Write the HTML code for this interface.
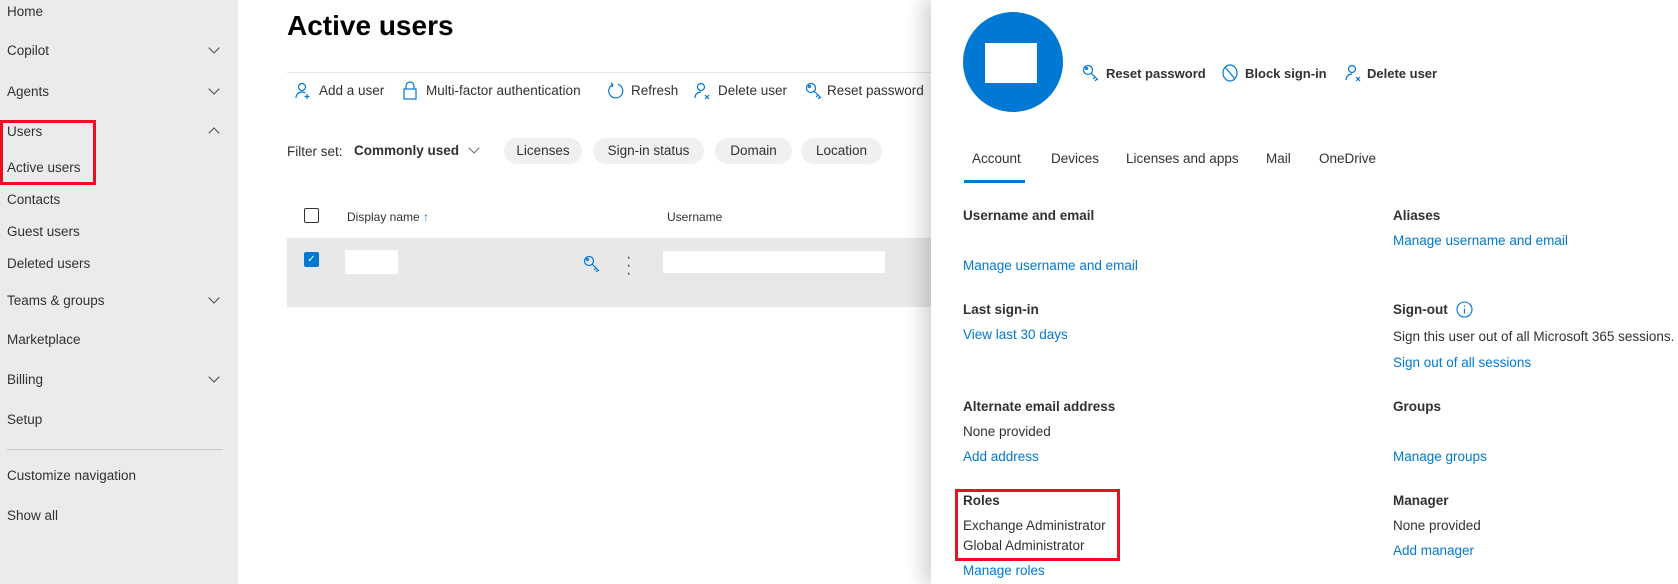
<!DOCTYPE html>
<html><head><meta charset="utf-8"><style>
*{margin:0;padding:0;box-sizing:border-box}
body{width:1678px;height:584px;overflow:hidden;background:#fff;font-family:"Liberation Sans",sans-serif;font-size:13.5px;color:#323130;position:relative}
.a{position:absolute;white-space:nowrap;line-height:18px}
.sb{position:absolute;left:0;top:0;width:238px;height:584px;background:#ebebeb}
.chev{position:absolute;width:8px;height:8px;border-right:1.3px solid #444;border-bottom:1.3px solid #444;transform:rotate(45deg)}
.up{transform:rotate(-135deg)}
.lk{color:#0078d4}
.b{font-weight:bold}
.pill{position:absolute;height:26px;top:138px;background:#f0f0f0;border-radius:13px;text-align:center;line-height:26px;color:#323130}
.panel{position:absolute;left:931px;top:0;width:747px;height:584px;background:#fff;box-shadow:-8px 0 18px rgba(0,0,0,.18)}
svg{position:absolute}
</style></head><body>
<div class="sb"></div>
<div class="a" style="left:7px;top:3px">Home</div>
<div class="a" style="left:7px;top:42px">Copilot</div><div class="chev" style="left:210px;top:44px"></div>
<div class="a" style="left:7px;top:83px">Agents</div><div class="chev" style="left:210px;top:85px"></div>
<div class="a" style="left:7px;top:123px">Users</div><div class="chev up" style="left:210px;top:129px"></div>
<div class="a" style="left:7px;top:159px">Active users</div>
<div class="a" style="left:7px;top:191px">Contacts</div>
<div class="a" style="left:7px;top:223px">Guest users</div>
<div class="a" style="left:7px;top:255px">Deleted users</div>
<div class="a" style="left:7px;top:292px">Teams &amp; groups</div><div class="chev" style="left:210px;top:294px"></div>
<div class="a" style="left:7px;top:331px">Marketplace</div>
<div class="a" style="left:7px;top:371px">Billing</div><div class="chev" style="left:210px;top:373px"></div>
<div class="a" style="left:7px;top:411px">Setup</div>
<div style="position:absolute;left:7px;top:449px;width:216px;height:1px;background:#c8c8c8"></div>
<div class="a" style="left:7px;top:467px">Customize navigation</div>
<div class="a" style="left:7px;top:507px">Show all</div>
<div style="position:absolute;left:0;top:120px;width:96px;height:65px;border:3px solid #e81123"></div>

<div class="a b" style="left:287px;top:9px;font-size:28px;line-height:34px;color:#000">Active users</div>
<div style="position:absolute;left:287px;top:72px;width:650px;height:1px;background:#e6e6e6"></div>
<svg style="left:294px;top:82px" width="18" height="18" viewBox="0 0 18 18" fill="none" stroke="#0078d4" stroke-width="1.2"><circle cx="8" cy="5" r="3.5"/><path d="M2 16c0-4 3-6 6-6 1.5 0 2.5.4 3.5 1M13 12v5M10.5 14.5h5"/></svg>
<div class="a" style="left:319px;top:82px">Add a user</div>
<svg style="left:402px;top:81px" width="16" height="19" viewBox="0 0 16 19" fill="none" stroke="#0078d4" stroke-width="1.2"><path d="M4 8V5a4 4 0 0 1 8 0v3"/><rect x="2" y="8" width="12" height="10"/></svg>
<div class="a" style="left:426px;top:82px">Multi-factor authentication</div>
<svg style="left:607px;top:82px" width="18" height="18" viewBox="0 0 18 18" fill="none" stroke="#0078d4" stroke-width="1.2"><path d="M6 2.5A7 7 0 1 0 11 2.3M6 2.5L4 1M6 2.5L5 5"/></svg>
<div class="a" style="left:631px;top:82px">Refresh</div>
<svg style="left:693px;top:82px" width="18" height="18" viewBox="0 0 18 18" fill="none" stroke="#0078d4" stroke-width="1.2"><circle cx="8" cy="5" r="3.5"/><path d="M2 16c0-4 3-6 6-6M12 13l4 4M16 13l-4 4"/></svg>
<div class="a" style="left:718px;top:82px">Delete user</div>
<svg style="left:805px;top:82px" width="18" height="18" viewBox="0 0 18 18" fill="none" stroke="#0078d4" stroke-width="1.2"><circle cx="6" cy="6" r="4.5"/><circle cx="4.5" cy="4.5" r="1"/><path d="M9 9l7 7M13 13l-2 2M15 15l-2 2"/></svg>
<div class="a" style="left:827px;top:82px">Reset password</div>

<div class="a" style="left:287px;top:143px">Filter set:</div>
<div class="a b" style="left:354px;top:142px">Commonly used</div>
<div class="chev" style="left:470px;top:144px;border-color:#666"></div>
<div class="pill" style="left:504px;width:78px">Licenses</div>
<div class="pill" style="left:593px;width:111px">Sign-in status</div>
<div class="pill" style="left:715px;width:77px">Domain</div>
<div class="pill" style="left:801px;width:81px">Location</div>

<div style="position:absolute;left:304px;top:208px;width:15px;height:15px;border:1.3px solid #333;border-radius:2px"></div>
<div class="a" style="left:347px;top:208px;font-size:12px">Display name <span style="color:#0078d4">↑</span></div>
<div class="a" style="left:667px;top:208px;font-size:12px">Username</div>
<div style="position:absolute;left:287px;top:238px;width:650px;height:69px;background:#e8e8e8"></div>
<div style="position:absolute;left:304px;top:252px;width:15px;height:15px;background:#0078d4;border-radius:2px;color:#fff;font-size:10px;line-height:15px;text-align:center">✓</div>
<div style="position:absolute;left:345px;top:250px;width:53px;height:24px;background:#fff"></div>
<svg style="left:583px;top:255px" width="18" height="18" viewBox="0 0 18 18" fill="none" stroke="#0078d4" stroke-width="1.2"><circle cx="6" cy="6" r="4.5"/><circle cx="4.5" cy="4.5" r="1"/><path d="M9 9l7 7M13 13l-2 2M15 15l-2 2"/></svg>
<div class="a" style="left:626px;top:254px;font-size:16px;line-height:8px;color:#444">·<br>·<br>·</div>
<div style="position:absolute;left:663px;top:251px;width:222px;height:22px;background:#fff"></div>

<div class="panel"></div>
<div style="position:absolute;left:963px;top:12px;width:100px;height:100px;border-radius:50%;background:#0078d4"></div>
<div style="position:absolute;left:985px;top:43px;width:52px;height:40px;background:#fff"></div>
<svg style="left:1082px;top:64px" width="18" height="18" viewBox="0 0 18 18" fill="none" stroke="#0078d4" stroke-width="1.2"><circle cx="6" cy="6" r="4.5"/><circle cx="4.5" cy="4.5" r="1"/><path d="M9 9l7 7M13 13l-2 2M15 15l-2 2"/></svg>
<div class="a b" style="left:1106px;top:65px;font-size:13px">Reset password</div>
<svg style="left:1221px;top:64px" width="18" height="18" viewBox="0 0 18 18" fill="none" stroke="#0078d4" stroke-width="1.2"><ellipse cx="9" cy="9" rx="7" ry="8"/><path d="M4 3l10 12"/></svg>
<div class="a b" style="left:1245px;top:65px;font-size:13px">Block sign-in</div>
<svg style="left:1344px;top:64px" width="18" height="18" viewBox="0 0 18 18" fill="none" stroke="#0078d4" stroke-width="1.2"><circle cx="8" cy="5" r="3.5"/><path d="M2 16c0-4 3-6 6-6M12 13l4 4M16 13l-4 4"/></svg>
<div class="a b" style="left:1367px;top:65px;font-size:13px">Delete user</div>

<div class="a" style="left:972px;top:150px">Account</div>
<div style="position:absolute;left:964px;top:180px;width:61px;height:3px;background:#0078d4"></div>
<div class="a" style="left:1051px;top:150px">Devices</div>
<div class="a" style="left:1126px;top:150px">Licenses and apps</div>
<div class="a" style="left:1266px;top:150px">Mail</div>
<div class="a" style="left:1319px;top:150px">OneDrive</div>

<div class="a b" style="left:963px;top:207px">Username and email</div>
<div class="a lk" style="left:963px;top:257px">Manage username and email</div>
<div class="a b" style="left:1393px;top:207px">Aliases</div>
<div class="a lk" style="left:1393px;top:232px">Manage username and email</div>
<div class="a b" style="left:963px;top:301px">Last sign-in</div>
<div class="a lk" style="left:963px;top:326px">View last 30 days</div>
<div class="a b" style="left:1393px;top:301px">Sign-out</div>
<svg style="left:1456px;top:301px" width="17" height="17" viewBox="0 0 17 17" fill="none" stroke="#0078d4" stroke-width="1.1"><circle cx="8.5" cy="8.5" r="7.5"/><path d="M8.5 7.5v5M8.5 4.5v1.2"/></svg>
<div class="a" style="left:1393px;top:328px">Sign this user out of all Microsoft 365 sessions.</div>
<div class="a lk" style="left:1393px;top:354px">Sign out of all sessions</div>
<div class="a b" style="left:963px;top:398px">Alternate email address</div>
<div class="a" style="left:963px;top:423px">None provided</div>
<div class="a lk" style="left:963px;top:448px">Add address</div>
<div class="a b" style="left:1393px;top:398px">Groups</div>
<div class="a lk" style="left:1393px;top:448px">Manage groups</div>
<div class="a b" style="left:963px;top:492px">Roles</div>
<div class="a" style="left:963px;top:517px">Exchange Administrator</div>
<div class="a" style="left:963px;top:537px">Global Administrator</div>
<div class="a lk" style="left:963px;top:562px">Manage roles</div>
<div class="a b" style="left:1393px;top:492px">Manager</div>
<div class="a" style="left:1393px;top:517px">None provided</div>
<div class="a lk" style="left:1393px;top:542px">Add manager</div>
<div style="position:absolute;left:955px;top:489px;width:165px;height:72px;border:3px solid #e81123"></div>
</body></html>
